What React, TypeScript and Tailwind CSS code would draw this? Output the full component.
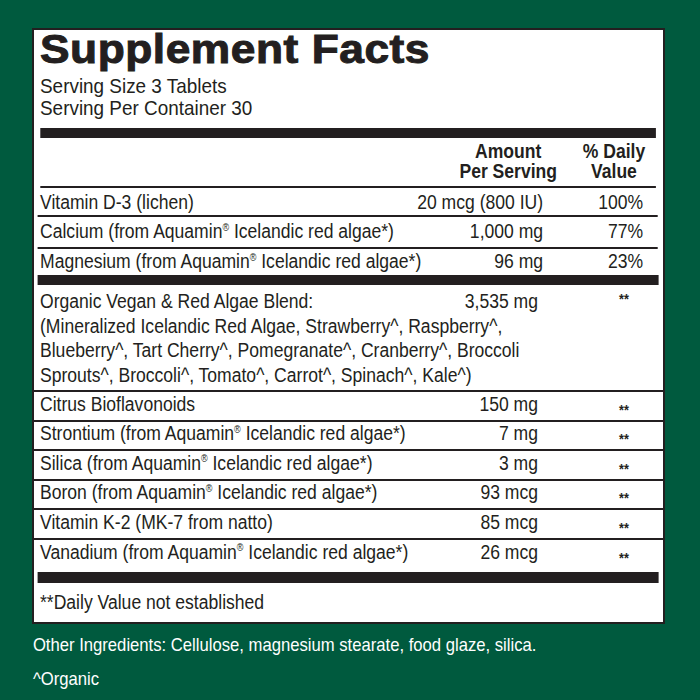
const sans = { fontFamily: '"Liberation Sans", Arial, sans-serif' };

// Liberation Sans squeezed horizontally stands in for the condensed face of the label
const Narrow = ({ className = '', children }: { className?: string; children: React.ReactNode }) => (
  <div className={`origin-left scale-x-[0.9] ${className}`}>{children}</div>
);

const Reg = () => <sup className="text-[10px] -top-[0.75em]">®</sup>;

const Stars = ({ top = false }: { top?: boolean }) => (
  <span className={`relative inline-block text-[14px] leading-none font-bold ${top ? 'top-[-4px]' : 'top-[4px]'}`}>**</span>
);

const topRows = [
  { name: <>Vitamin D-3 (lichen)</>, amount: '20 mcg (800 IU)', dv: '100%', h: 'h-[27px] pt-[4px]' },
  { name: <>Calcium (from Aquamin<Reg /> Icelandic red algae*)</>, amount: '1,000 mg', dv: '77%', h: 'h-[30px] pt-[4px]' },
  { name: <>Magnesium (from Aquamin<Reg /> Icelandic red algae*)</>, amount: '96 mg', dv: '23%', h: 'h-[26px] pt-[2px]' },
];

const lowerRows = [
  { name: <>Citrus Bioflavonoids</>, amount: '150 mg' },
  { name: <>Strontium (from Aquamin<Reg /> Icelandic red algae*)</>, amount: '7 mg' },
  { name: <>Silica (from Aquamin<Reg /> Icelandic red algae*)</>, amount: '3 mg' },
  { name: <>Boron (from Aquamin<Reg /> Icelandic red algae*)</>, amount: '93 mcg' },
  { name: <>Vitamin K-2 (MK-7 from natto)</>, amount: '85 mcg' },
  { name: <>Vanadium (from Aquamin<Reg /> Icelandic red algae*)</>, amount: '26 mcg' },
];

export default function App() {
  return (
    <div className="w-[700px] h-[700px] bg-[#005a3e] overflow-hidden text-[19.5px] leading-[20px]" style={sans}>
      <div className="pt-[28px] pl-[32px]">
        {/* Facts panel */}
        <div className="w-[633px] h-[596px] bg-white border-2 border-[#231f20] text-[#231f20]">
          <div className="pl-[6px] pt-[1px] h-[38px]">
            <h1 className="inline-block origin-left scale-x-[1.08] text-[41px] leading-[37px] font-bold tracking-[0.5px] [-webkit-text-stroke:1px_#231f20]">
              Supplement Facts
            </h1>
          </div>

          <Narrow className="w-[699px]">
            <div className="mt-[7px] pl-[6.7px] text-[21px] leading-[22px]">
              <div>Serving Size 3 Tablets</div>
              <div>Serving Per Container 30</div>
            </div>
            <div className="mt-[9px] ml-[6.7px] mr-[7.9px] h-[10px] bg-[#231f20]" />

            {/* Column headings */}
            <div className="mt-[3px] pr-[15.6px] flex justify-end font-bold">
              <div className="mr-[24.3px] text-center">
                Amount
                <br />
                Per Serving
              </div>
              <div className="w-[78px] text-center">
                % Daily
                <br />
                Value
              </div>
            </div>
            <div className="mt-[5px] ml-[6.7px] mr-[7.9px] h-[2px] bg-[#231f20]" />

            {topRows.map((r, i) => (
              <div key={i}>
                {i > 0 && <div className="ml-[4.4px] mr-[5.7px] h-[2px] bg-[#231f20]" />}
                <div className={`flex pl-[6.7px] pr-[22.3px] ${r.h}`}>
                  <div className="flex-1">{r.name}</div>
                  <div className="text-right">{r.amount}</div>
                  <div className="w-[111.1px] text-right">{r.dv}</div>
                </div>
              </div>
            ))}
            <div className="ml-[4.4px] mr-[4.6px] h-[10px] bg-[#231f20]" />

            {/* Blend */}
            <div className="pl-[6.7px] pt-[4px] pb-[3px] leading-[24.5px]">
              <div className="flex">
                <div className="flex-1">Organic Vegan &amp; Red Algae Blend:</div>
                <div className="text-right">3,535 mg</div>
                <div className="w-[139px] pl-[90px]">
                  <Stars top />
                </div>
              </div>
              <div>(Mineralized Icelandic Red Algae, Strawberry^, Raspberry^,</div>
              <div>Blueberry^, Tart Cherry^, Pomegranate^, Cranberry^, Broccoli</div>
              <div>Sprouts^, Broccoli^, Tomato^, Carrot^, Spinach^, Kale^)</div>
            </div>

            {lowerRows.map((r, i) => (
              <div
                key={i}
                className={`flex border-t-2 border-[#231f20] pl-[6.7px] ${i === lowerRows.length - 1 ? 'h-[34px] pt-[2px]' : 'h-[29.6px] pt-[1.7px]'}`}
              >
                <div className="flex-1">{r.name}</div>
                <div className="text-right">{r.amount}</div>
                <div className="w-[139px] pl-[90px]">
                  <Stars />
                </div>
              </div>
            ))}
            <div className="ml-[4.4px] mr-[4.6px] h-[11px] bg-[#231f20]" />
            <div className="pl-[6.7px] pt-[9px]">**Daily Value not established</div>
          </Narrow>
        </div>

        {/* Below panel */}
        <Narrow className="w-[742px] text-white text-[18.5px]">
          <div className="mt-[11px] pl-[1px]">Other Ingredients: Cellulose, magnesium stearate, food glaze, silica.</div>
          <div className="mt-[14px] pl-[1px]">^Organic</div>
        </Narrow>
      </div>
    </div>
  );
}
